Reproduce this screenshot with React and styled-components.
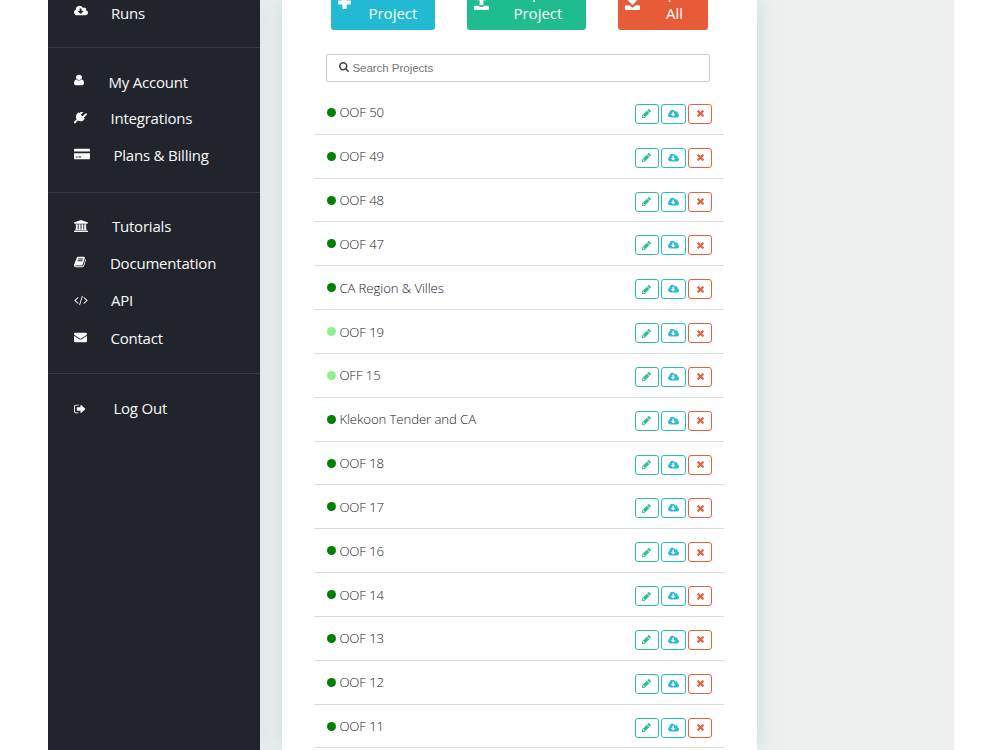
import React from 'react';
import styled, { createGlobalStyle } from 'styled-components';

const Global = createGlobalStyle`
  * { box-sizing: border-box; }
  html, body { margin: 0; height: 750px; overflow: hidden; background: #fff; }
  body { font-family: "Open Sans", sans-serif; }
`;

const Page = styled.div`
  display: flex;
  width: 905.6px;
  height: 750px;
  margin-left: 48.4px;
  overflow: hidden;
  background: #eef0f0;
`;

const Sidebar = styled.nav`
  width: 212px;
  flex: none;
  background: #21242d;
  box-shadow: 0 0 18px rgba(160, 195, 200, 0.35);
`;

const NavGroup = styled.div`
  height: ${p => p.$height}px;
  padding-top: ${p => p.$top}px;
  border-bottom: ${p => (p.$last ? 'none' : '1px solid #363942')};
`;

const NavItem = styled.a`
  display: flex;
  align-items: center;
  height: ${p => p.$h || 37.2}px;
  padding-left: 25.5px;
  color: #fafafa;
  font-size: 15px;
  letter-spacing: -0.2px;
  line-height: 20px;
  white-space: nowrap;

  svg { flex: none; margin-right: ${p => p.$gap}px; margin-top: ${p => p.$lift ?? -1}px; }
`;

const NavLabel = styled.span`
  display: inline-block;
  width: ${p => p.$w}px;
`;

const Card = styled.main`
  width: 475px;
  flex: none;
  margin-left: 22px;
  background: #fff;
  box-shadow: 0 0 18px rgba(160, 195, 200, 0.5);
`;

const Actions = styled.div`
  display: flex;
  height: 30px;
  padding-left: 49px;
  align-items: flex-end;
`;

const ActionButton = styled.button`
  display: flex;
  justify-content: space-between;
  align-items: center;
  flex: none;
  width: ${p => p.$w}px;
  height: 56px;
  margin: 0 ${p => p.$after}px 0 0;
  padding: 2px ${p => p.$right}px 0 7px;
  border: 0;
  border-radius: 3px;
  background: ${p => p.$color};
  color: #fff;
  font: 15px/21px "Open Sans", sans-serif;
  text-align: center;

  svg { margin-top: -2px; }
`;

const Search = styled.label`
  display: flex;
  align-items: center;
  width: 384px;
  height: 28px;
  margin: 24px 0 0 44px;
  padding-left: 12px;
  border: 1px solid #ccc;
  border-radius: 2px;
  color: #444;
  font: 11.6px "Liberation Sans", sans-serif;

  svg { margin-top: -2px; }
  span { color: #777; margin: -1px 0 0 3px; letter-spacing: -0.07px; }
`;

const List = styled.ul`
  width: 410px;
  margin: 9px 0 0 32px;
  padding: 0;
  list-style: none;
`;

const Row = styled.li`
  display: flex;
  align-items: center;
  height: 43.83px;
  padding: 0 12px 0 12.5px;
  border-bottom: 1px solid #dcdcdc;
`;

const Dot = styled.i`
  width: 9px;
  height: 9px;
  margin-right: 3.5px;
  border-radius: 50%;
  background: ${p => (p.$light ? '#90ee90' : '#008000')};
`;

const Name = styled.span`
  flex: 1;
  color: #22232b;
  font-size: 13.2px;
  letter-spacing: -0.1px;
  font-weight: 300;
  line-height: 18px;
`;

const Tools = styled.div`
  display: flex;
  gap: 2px;
  margin-top: 3px;
`;

const Tool = styled.button`
  display: grid;
  place-items: center;
  width: 24.6px;
  height: 20px;
  padding: 0;
  border: 1px solid ${p => p.$color};
  border-radius: 3px;
  background: #fff;
  color: ${p => p.$color};
`;

const shapes = {
  cloud: ['-64 0 1920 1792', 'M1216 928q0-14-9-23t-23-9h-224v-352q0-13-9.5-22.5t-22.5-9.5h-192q-13 0-22.5 9.5t-9.5 22.5v352h-224q-13 0-22.5 9.5t-9.5 22.5q0 14 9 23l352 352q9 9 23 9t23-9l351-351q10-12 10-24zm640 224q0 159-112.5 271.5t-271.5 112.5h-1088q-185 0-316.5-131.5t-131.5-316.5q0-130 70-240t188-165q-2-30-2-43 0-212 150-362t362-150q156 0 285.5 87t188.5 231q71-62 166-62 106 0 181 75t75 181q0 76-41 138 130 31 213.5 135.5t83.5 238.5z'],
  user: ['256 0 1280 1792', 'M1536 1399q0 109-62.5 187t-150.5 78h-854q-88 0-150.5-78t-62.5-187q0-85 8.5-160.5t31.5-152 58.5-131 94-89 134.5-34.5q131 128 313 128t313-128q76 0 134.5 34.5t94 89 58.5 131 31.5 152 8.5 160.5zm-256-887q0 159-112.5 271.5t-271.5 112.5-271.5-112.5-112.5-271.5 112.5-271.5 271.5-112.5 271.5 112.5 112.5 271.5z'],
  plug: ['0 256 1792 1792', 'M1755 453q37 38 37 90.5t-37 90.5l-401 400 150 150-160 160q-163 163-389.5 186.5t-411.5-100.5l-362 362h-181v-181l362-362q-124-185-100.5-411.5t186.5-389.5l160-160 150 150 400-401q38-37 91-37t90 37 37 90.5-37 90.5l-400 401 234 234 401-400q38-37 91-37t90 37z'],
  card: ['0 0 2304 1792', 'M0 256q0-128 128-128h2048q128 0 128 128v256H0zM0 768h2304v768q0 128-128 128H128Q0 1664 0 1536zM256 1280v128h256v-128zm384 0v128h384v-128z'],
  bank: ['0 0 1920 1792', 'M960 0l960 384v128h-128q0 26-20 45t-48 19H196q-28 0-48-19t-20-45H0V384zM256 640h256v768h128V640h256v768h128V640h256v768h128V640h256v768h60q28 0 48 19t20 45v64H128v-64q0-26 20-45t48-19h60zM68 1600h1784q28 0 48 19t20 45v128H0v-128q0-26 20-45t48-19z'],
  book: ['0 0 1664 1792', 'M1639 478q40 57 18 129l-275 906q-19 64-76.5 107.5t-122.5 43.5h-923q-77 0-148.5-53.5t-99.5-131.5q-24-67-2-127 0-4 3-27t4-37q1-8-3-21.5t-3-19.5q2-11 8-21t16.5-23.5 16.5-23.5q23-38 45-91.5t30-91.5q3-10 .5-30t-.5-28q3-11 17-28t17-23q21-36 42-92t25-90q1-9-2.5-32t.5-28q4-13 22-30.5t22-22.5q19-26 42.5-84.500t27.500-96.500q1-8-3-25.500t-2-26.500q2-8 9-18t18-23 17-21q8-12 16.500-30.500t15-35 16-36 19.500-32 26.500-23.500 36-11.500 47.500 5.500l-1 3q38-9 51-9h761q74 0 114 56t18 130l-274 906q-36 119-71.500 153.500t-128.500 34.500h-869q-27 0-38 15-11 16-1 43 24 70 144 70h923q29 0 56-15.500t35-41.500l300-987q7-22 5-57 38 15 59 43zm-1064 2q-4 13 2 22.500t20 9.500h608q13 0 25.500-9.500t16.500-22.500l21-64q4-13-2-22.500t-20-9.500h-608q-13 0-25.500 9.500t-16.500 22.500zm-83 256q-4 13 2 22.500t20 9.500h608q13 0 25.500-9.500t16.500-22.500l21-64q4-13-2-22.500t-20-9.500h-608q-13 0-25.500 9.500t-16.500 22.500z'],
  code: ['64 0 1920 1792', 'M681 1399l-50 50q-10 10-23 10t-23-10l-466-466q-10-10-10-23t10-23l466-466q10-10 23-10t23 10l50 50q10 10 10 23t-10 23l-393 393 393 393q10 10 10 23t-10 23zm591-1067l-373 1291q-4 13-15.5 19.5t-23.5 2.5l-62-17q-13-4-19.5-15.5t-2.5-24.5l373-1291q4-13 15.5-19.5t23.5-2.5l62 17q13 4 19.5 15.5t2.5 24.5zm657 651l-466 466q-10 10-23 10t-23-10l-50-50q-10-10-10-23t10-23l393-393-393-393q-10-10-10-23t10-23l50-50q10-10 23-10t23 10l466 466q10 10 10 23t-10 23z'],
  mail: ['0 0 1792 1792', 'M1792 710v794q0 66-47 113t-113 47h-1472q-66 0-113-47t-47-113v-794q44 49 101 87 362 246 497 345 57 42 92.5 65.5t94.5 48 110 24.5h2q51 0 110-24.5t94.5-48 92.5-65.5q170-123 498-345 57-39 100-87zm0-294q0 79-49 151t-122 123q-376 261-468 325-10 7-42.5 31t-54 38.5-52 32.5-57.5 27-50 9h-2q-23 0-50-9t-57.5-27-52-32.5-54-38.5-42.5-31q-91-64-262-182.5t-205-142.5q-62-42-117-115.5t-55-136.5q0-78 41.5-130t118.5-52h1472q65 0 112.5 47t47.5 113z'],
  exit: ['64 0 1664 1792', 'M704 1440q0 4 1 20t.5 26.5-3 23.5-10 19.5-20.5 6.5h-320q-119 0-203.5-84.5t-84.5-203.5v-704q0-119 84.5-203.5t203.5-84.5h320q13 0 22.5 9.5t9.5 22.5q0 4 1 20t.5 26.5-3 23.5-10 19.5-20.5 6.5h-320q-66 0-113 47t-47 113v704q0 66 47 113t113 47h312l11.5 1 11.5 3 8 5.5 7 9 2 13.5zm928-544q0 26-19 45l-544 544q-19 19-45 19t-45-19-19-45v-288h-448q-26 0-45-19t-19-45v-384q0-26 19-45t45-19h448v-288q0-26 19-45t45-19 45 19l544 544q19 19 19 45z'],
  search: ['64 128 1664 1664', 'M1216 832q0-185-131.5-316.5t-316.5-131.5-316.5 131.5-131.5 316.5 131.5 316.5 316.5 131.5 316.5-131.5 131.5-316.5zm512 832q0 52-38 90t-90 38q-54 0-90-38l-343-342q-179 124-399 124-143 0-273.5-55.5t-225-150-150-225-55.5-273.5 55.5-273.5 150-225 225-150 273.5-55.5 273.5 55.5 225 150 150 225 55.5 273.5q0 220-124 399l343 343q37 37 37 90z'],
  pencil: ['128 128 1536 1536', 'M491 1536l91-91-235-235-91 91v107h128v128h107zM960 416l416 416-832 832h-416v-416zm683 96q0 53-37 90l-166 166-416-416 166-165q36-38 90-38 53 0 91 38l235 234q37 39 37 91z'],
  times: ['302 366 1188 1188', 'M1490 1322q0 40-28 68l-136 136q-28 28-68 28t-68-28l-294-294-294 294q-28 28-68 28t-68-28l-136-136q-28-28-28-68t28-68l294-294-294-294q-28-28-28-68t28-68l136-136q28-28 68-28t68 28l294 294 294-294q28-28 68-28t68 28l136 136q28 28 28 68t-28 68l-294 294 294 294q28 28 28 68z'],
  plus: ['0 0 14 14', 'M5.500 0h3q.8 0 .8.8v4h4q.7 0 .7.8v2.800q0 .8-.7.8h-4v4q0 .8-.8.8h-3q-.8 0-.8-.8v-4h-4Q0 9.200 0 8.400V5.600q0-.8.7-.8h4v-4q0-.8.8-.8z'],
  upload: ['0 0 16 16', 'M8 0l5 5.500H10V11H6V5.500H3zM0 12.500q0-1 1-1h4q.5 1.200 1.500 1.200h3q1 0 1.500-1.200h4q1 0 1 1V15q0 1-1 1H1q-1 0-1-1z'],
  download: ['0 0 16 16', 'M6 0h4v5h3.500L8 11 2.500 5H6zM0 12q0-1 1-1h3.500L7 13q1 .7 2 0l2.500-2H15q1 0 1 1v3q0 1-1 1H1q-1 0-1-1z'],
};

function Icon({ name, w, h }) {
  const [viewBox, d] = shapes[name];
  return (
    <svg width={w} height={h} viewBox={viewBox} preserveAspectRatio="none" fill="currentColor" aria-hidden="true">
      <path d={d} fillRule="evenodd" />
    </svg>
  );
}

const groups = [
  { height: 48, top: 0, items: [['cloud', 'Runs', 14, 12, 23, 34, -3, 25]] },
  { height: 145, top: 15, items: [
    ['user', 'My Account', 10, 12, 24.5, 79, -3],
    ['plug', 'Integrations', 13, 13, 23.5, 82, 1, 36.6],
    ['card', 'Plans & Billing', 16, 12, 23.5, 97, -2],
  ] },
  { height: 181, top: 14.5, items: [
    ['bank', 'Tutorials', 14, 12, 24, 60],
    ['book', 'Documentation', 12, 12, 24, 106, -3],
    ['code', 'API', 14, 12, 23, 23],
    ['mail', 'Contact', 13, 12, 23.5, 53],
  ] },
  { height: 376, top: 15, last: true, items: [['exit', 'Log Out', 12, 12, 27.5, 54, 2]] },
];

const projects = ['OOF 50', 'OOF 49', 'OOF 48', 'OOF 47', 'CA Region & Villes', 'OOF 19', 'OFF 15',
  'Klekoon Tender and CA', 'OOF 18', 'OOF 17', 'OOF 16', 'OOF 14', 'OOF 13', 'OOF 12', 'OOF 11'];

export default function App() {
  return (
    <>
      <Global />
      <Page>
        <Sidebar>
          {groups.map((g, i) => (
            <NavGroup key={i} $height={g.height} $top={g.top} $last={g.last}>
              {g.items.map(([icon, label, w, h, gap, width, lift, rowHeight]) => (
                <NavItem key={label} $gap={gap} $lift={lift} $h={rowHeight}>
                  <Icon name={icon} w={w} h={h} />
                  <NavLabel $w={width}>{label}</NavLabel>
                </NavItem>
              ))}
            </NavGroup>
          ))}
        </Sidebar>
        <Card>
          <Actions>
            <ActionButton $color="#22bad3" $w={103.5} $after={32} $right={17.5}>
              <Icon name="plus" w={13} h={13} /><span>New<br />Project</span>
            </ActionButton>
            <ActionButton $color="#1fbc8f" $w={119} $after={32} $right={23.5}>
              <Icon name="upload" w={15} h={15} /><span>Import<br />Project</span>
            </ActionButton>
            <ActionButton $color="#e85b39" $w={90.5} $after={0} $right={11}>
              <Icon name="download" w={15} h={15} /><span>Export<br />All</span>
            </ActionButton>
          </Actions>
          <Search><Icon name="search" w={10} h={10} /><span>Search Projects</span></Search>
          <List>
            {projects.map(name => (
              <Row key={name}>
                <Dot $light={name === 'OOF 19' || name === 'OFF 15'} />
                <Name>{name}</Name>
                <Tools>
                  <Tool $color="#2fbf95"><Icon name="pencil" w={9} h={9} /></Tool>
                  <Tool $color="#2bbcd4"><Icon name="cloud" w={11} h={10} /></Tool>
                  <Tool $color="#e9603f"><Icon name="times" w={7} h={7} /></Tool>
                </Tools>
              </Row>
            ))}
          </List>
        </Card>
      </Page>
    </>
  );
}
